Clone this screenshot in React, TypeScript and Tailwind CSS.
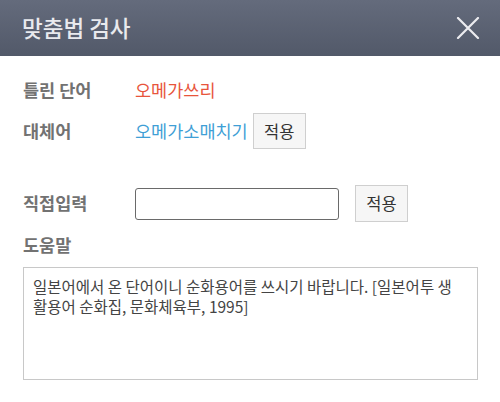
import React, { useState } from "react";

const FONT = { fontFamily: '"Noto Sans CJK KR", "Noto Sans", sans-serif' };

const ApplyButton = ({ className = "" }: { className?: string }) => (
  <button
    className={`flex items-center justify-center border border-[#cfcfcf] bg-[#f6f6f6] text-[16.5px] text-[#333] ${className}`}
  >
    적용
  </button>
);

export default function App() {
  const [direct, setDirect] = useState("");

  return (
    <div className="w-[500px] h-[402px] bg-white overflow-hidden" style={FONT}>
      {/* Header */}
      <div className="flex h-[56px] items-center justify-between bg-gradient-to-b from-[#646b7c] to-[#525969] pl-[22px] pr-[20px]">
        <h1 className="text-[22.5px] font-medium text-[#e9eaee]">맞춤법 검사</h1>
        <svg width="24" height="22" viewBox="0 0 24 22" className="text-[#ececf0]">
          <path d="M2 1 L22 21 M22 1 L2 21" stroke="currentColor" strokeWidth="2.2" strokeLinecap="round" />
        </svg>
      </div>

      {/* Body */}
      <div className="flex flex-col px-[23px]">
        <div className="mt-[22px] flex h-[24px] items-center">
          <span className="w-[112px] text-[17.5px] font-bold text-[#727272]">틀린 단어</span>
          <span className="text-[17.5px] text-[#e8553c]">오메가쓰리</span>
        </div>

        <div className="mt-[11px] flex h-[36px] items-center">
          <span className="w-[112px] text-[17.5px] font-bold text-[#727272]">대체어</span>
          <span className="text-[17.5px] text-[#3f9fd6]">오메가소매치기</span>
          <ApplyButton className="ml-[5px] h-[36px] w-[53px]" />
        </div>

        <div className="mt-[36px] flex h-[37px] items-center">
          <span className="w-[112px] text-[17.5px] font-bold text-[#727272]">직접입력</span>
          <input
            value={direct}
            onChange={(e) => setDirect(e.target.value)}
            className="h-[32px] w-[204px] rounded-[3px] border border-[#6a6a6a] px-2 text-[15px] outline-none"
          />
          <ApplyButton className="ml-[16px] h-[37px] w-[53px]" />
        </div>

        <div className="mt-[11px] flex h-[24px] items-center">
          <span className="text-[17.5px] font-bold text-[#727272]">도움말</span>
        </div>

        <div className="mt-[10px] h-[113px] w-[455px] border border-[#c8c8c8] pl-[9px] pr-[16px] pt-[8px] text-[15.5px] leading-[20px] text-[#444]">
          일본어에서 온 단어이니 순화용어를 쓰시기 바랍니다. [일본어투 생활용어 순화집, 문화체육부, 1995]
        </div>
      </div>
    </div>
  );
}
